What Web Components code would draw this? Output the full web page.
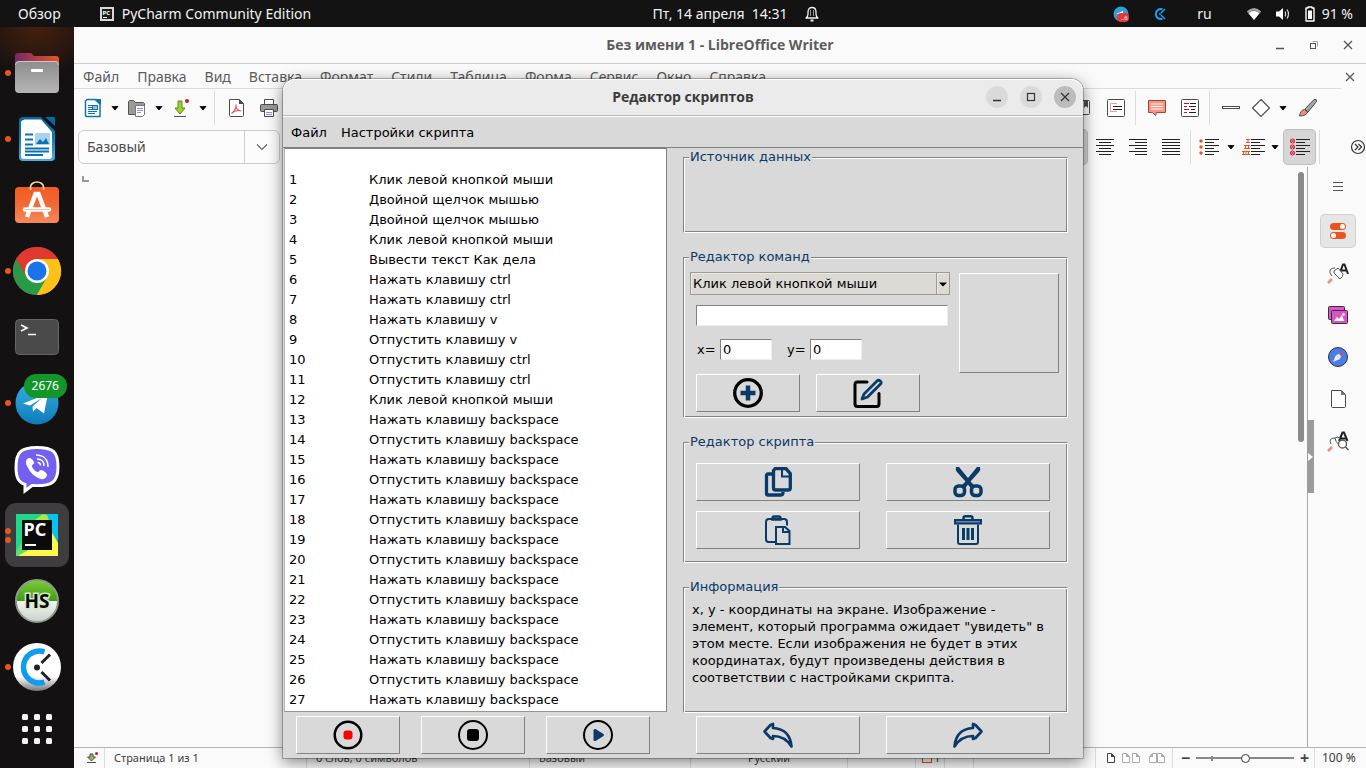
<!DOCTYPE html>
<html lang="ru">
<head>
<meta charset="utf-8">
<meta name="viewport" content="width=device-width, initial-scale=1">
<title>Рабочий стол</title>
<style>
html, body { margin: 0; height: 100%; }
body { overflow: hidden; background: #fafafa; font: 14px/20px "Noto Sans", "Open Sans", sans-serif; color: #3d3d3d; }
</style>
</head>
<body>
<desk-top></desk-top>
<script>
const ICONS = {
  /* top bar */
  pc: ['0 0 14 14', '<rect width="14" height="14" fill="#d8d8d8"/><rect x="2" y="2" width="10" height="10" fill="#1c1c1c"/><text x="2.5" y="7.5" font-family="Noto Sans" font-size="6" font-weight="700" fill="#fff">PC</text><path d="M3 10.5h4" stroke="#fff"/>'],
  bell: ['0 0 16 18', '<path d="M2 13c1.5-1 2-2 2-4V7c0-3 1.5-4.5 4-4.500S12 4 12 7v2c0 2 .5 3 2 4z" fill="none" stroke="#f2f2f2" stroke-width="1.3" stroke-linejoin="round"/><path d="M6.500 15.500h3" stroke="#f2f2f2" stroke-width="2"/><path d="M6.500 5v6M9.500 5v6" stroke="#bbb" stroke-width=".8"/>'],
  tgTray: ['0 0 16 16', '<circle cx="8" cy="8" r="7.5" fill="#2d9fd9"/><path d="M3 8l7-3v4z" fill="#fff"/><rect x="4" y="7" width="12" height="9" rx="4" fill="#e53935"/><text x="8" y="14" font-family="Noto Sans" font-size="6" fill="#fff">..6</text>'],
  clockTray: ['0 0 14 14', '<path d="M9.500 2.300A5 5 0 1 0 9.500 11.700" fill="none" stroke="#12a5f4" stroke-width="2"/><path d="M8 6l4-4M8 8l4 4" stroke="#12a5f4" stroke-width="1.5"/><circle cx="7" cy="7" r="1" fill="#12a5f4"/>'],
  wifi: ['0 0 16 16', '<path d="M1 5.500Q8-1 15 5.500L8 14z" fill="#777"/><path d="M1 5.500Q8-1 15 5.500L14 6.700Q8 1.500 2 6.700z" fill="#aaa"/><path d="M2.500 7.200Q8 3 13.500 7.200L8 14z" fill="#fff"/>'],
  volume: ['0 0 16 16', '<path d="M1 5.500h3L8 2v12L4 10.500H1z" fill="#fff"/><path d="M10 5.500q1.500 2.500 0 5M12 3.500q3 4.500 0 9" fill="none" stroke="#ddd" stroke-width="1.2"/>'],
  battery: ['0 0 12 16', '<path d="M4 2V1h4v1h2v13H2V2z" fill="none" stroke="#fff" stroke-width="1.4" stroke-linejoin="round"/><path d="M4 4.500h4V13H4z" fill="#fff"/>'],
  /* dock */
  files: ['0 0 48 48', '<linearGradient id="g" x2="1"><stop stop-color="#77296a"/><stop offset="1" stop-color="#e9541f"/></linearGradient><linearGradient id="h" x2="0" y2="1"><stop stop-color="#8d8d8d"/><stop offset="1" stop-color="#b5b5b5"/></linearGradient><path d="M2 7q0-3 3-3h13l3 3h22q3 0 3 3v20H2z" fill="url(#g)"/><rect x="2" y="12" width="44" height="32" rx="4" fill="url(#h)"/><path d="M2.500 16q0-3.500 3.500-3.500h36q3.500 0 3.500 3.500" fill="none" stroke="#c8c8c8"/><rect x="18" y="20" width="12" height="3" rx="1" fill="#fff"/>'],
  writer: ['0 0 48 48', '<linearGradient id="w" x2="0" y2="1"><stop stop-color="#0369a3"/><stop offset=".5" stop-color="#0f7dbb"/><stop offset="1" stop-color="#4cb0e0"/></linearGradient><path d="M10 2h18l14 14v26q0 4-4 4H10q-4 0-4-4V6q0-4 4-4z" fill="url(#w)"/><path d="M11 4.500h17L39 17v24q0 3-3 3H11q-3 0-3-3V7.500q0-2.500 3-2.500z" fill="#fff"/><path d="M32 2h9q1 0 1 1v8z" fill="#0369a3"/><path d="M12 19.500h8M12 24.500h8M12 29.500h8M12 33.500h24M12 36.500h24M12 40h18" stroke="#0a73b3" stroke-width="2"/><rect x="22" y="18" width="15" height="12" rx="1" fill="#a8d3ee"/><path d="M23 29l4-5 3 3 3-4 3 6z" fill="#0a73b3"/>'],
  store: ['0 0 48 48', '<linearGradient id="s" x2="0" y2="1"><stop stop-color="#f15a24"/><stop offset=".5" stop-color="#f26a35"/><stop offset="1" stop-color="#f58a5a"/></linearGradient><rect x="2" y="6" width="44" height="36" rx="4" fill="url(#s)"/><path d="M17.500 9V6a6.500 5 0 0 1 13 0v3" fill="none" stroke="#f7d9a3" stroke-width="1.7"/><path d="M14 36L22.500 13h3L34 36" fill="none" stroke="#fff" stroke-width="4.5"/><path d="M12 28.500h24" stroke="#fff" stroke-width="4.5" stroke-linecap="round"/><path d="M12 28.500h24" stroke="#f3c3ad"/>'],
  chrome: ['0 0 48 48', '<circle cx="24" cy="24" r="24" fill="#e03a30"/><path d="M3.200 12A24 24 0 0 0 24 48L34.400 30 24 24 13.600 30z" fill="#2a9a48"/><path d="M44.800 12A24 24 0 0 1 24 48L34.400 30 34 12z" fill="#fbc116"/><path d="M24 12h20.800A24 24 0 0 0 3.200 12L13.600 30 24 24z" fill="#e03a30"/><path d="M24 24L34.400 30 24 48A24 24 0 0 0 46.500 16L44.800 12H24z" fill="#fbc116"/><circle cx="24" cy="24" r="12" fill="#fff"/><circle cx="24" cy="24" r="9.5" fill="#1a73e8"/>'],
  terminal: ['0 0 48 48', '<rect x="2.5" y="6.5" width="43" height="35" rx="4" fill="#4a4a4a" stroke="#666"/><path d="M8 12l6 3-6 3" fill="none" stroke="#fff" stroke-width="1.7"/><path d="M15 21.500h8" stroke="#fff" stroke-width="1.5"/>'],
  telegram: ['0 0 48 48', '<linearGradient id="t" x2="0" y2="1"><stop stop-color="#37aee2"/><stop offset="1" stop-color="#0d7cba"/></linearGradient><circle cx="24" cy="24" r="21.5" fill="url(#t)"/><path d="M10 24.500L35 14.500 31 34.500 23.500 29 20 32.500 19.500 27.500 29 19 17 26.500z" fill="#fff"/>'],
  viber: ['0 0 48 48', '<path d="M24 2.500C8 2.500 3 7 3 22c0 10 2 15 9 17.500V46l7-5.500c20 1 26-3 26-18.500S40 2.500 24 2.500z" fill="#7360f2" stroke="#fff" stroke-width="3"/><path d="M16 13c-3 1-4 4-2 8 4 8 8 11 14 13 3 1 6-2 6-4s-4-5-6-5-2 3-4 2-5-4-5-6 3-2 2-4-3-4-5-4z" fill="#fff"/><path d="M23 10c8 0 12 5 12 12M24 14c5 0 7 3 7 7M24.500 17.500c2 0 3 1 3 3" fill="none" stroke="#fff" stroke-width="1.5"/>'],
  pycharm: ['0 0 48 48', '<rect x="3" y="3" width="42" height="42" fill="#21d789"/><path d="M32 3h13v30L32 12z" fill="#07c3f2"/><path d="M22 9l8-6 4 1 3 8z" fill="#b5e63e"/><path d="M38 20l7 12v13H14L5 45l8-10z" fill="#fcf84a"/><path d="M3 40l8-12 6 10-12 7H3z" fill="#5fdd74"/><rect x="9" y="9" width="30" height="30" fill="#0b0b0b"/><text x="10.5" y="25" font-family="Noto Sans" font-size="18" font-weight="700" fill="#fff">PC</text><rect x="12" y="33" width="11" height="2" fill="#fff"/>'],
  hs: ['0 0 48 48', '<linearGradient id="e" x2="0" y2="1"><stop stop-color="#7fce3a"/><stop offset=".5" stop-color="#3f9a14"/><stop offset=".51" stop-color="#f4f4f4"/><stop offset="1" stop-color="#c9cfc9"/></linearGradient><circle cx="24" cy="24" r="21" fill="url(#e)" stroke="#8b9a8a" stroke-width="2"/><text x="24" y="31" text-anchor="middle" font-family="Noto Sans" font-size="19" font-weight="700" stroke="#d6e8cc" stroke-width="3" paint-order="stroke" fill="#0a0a0a">HS</text>'],
  clockify: ['0 0 48 48', '<linearGradient id="k" x2="0" y2="1"><stop offset=".7" stop-color="#fff"/><stop offset="1" stop-color="#777"/></linearGradient><circle cx="24" cy="24" r="24" fill="url(#k)"/><path d="M31.500 8.800A16 16 0 1 0 31.500 39.200" fill="none" stroke="#0d9cf0" stroke-width="5.5"/><circle cx="24" cy="24.5" r="3" fill="#222"/><path d="M28.500 20L37 11.500M28.500 29L37 37.500" stroke="#222" stroke-width="3"/>'],
  apps: ['0 0 30 30', '<g fill="#f3f3f3">' + [0, 12, 24].map(y => [0, 12, 24].map(x => `<rect x="${x}" y="${y}" width="6" height="6" rx="1.5"/>`).join('')).join('') + '</g>'],
  /* window controls */
  min: ['0 0 12 12', '<path d="M2 9.500h8" stroke="currentColor" stroke-width="1.5"/>'],
  max: ['0 0 12 12', '<rect x="2.5" y="2.5" width="7" height="7" fill="none" stroke="currentColor" stroke-width="1.2"/>'],
  restore: ['0 0 12 12', '<path d="M4.500 2.500h5v5" fill="none" stroke="#aaa"/><rect x="2.5" y="4.5" width="5" height="5" fill="none" stroke="currentColor"/>'],
  close: ['0 0 12 12', '<path d="M2 2l8 8M10 2l-8 8" stroke="currentColor" stroke-width="1.2"/>'],
  /* writer toolbars */
  arrow: ['0 0 8 8', '<path d="M1 2.500h6L4 6z" fill="#000" stroke="#000" stroke-width=".8"/>'],
  newDoc: ['0 0 20 20', '<path d="M4 1.500h8L17 6v12.500H3.500A1.500 1.500 0 0 1 2.500 17V3z" fill="#fff" stroke="#1173ae" stroke-width="1.5"/><path d="M12 1h6v6z" fill="#1173ae"/><path d="M5 7.500h4M5 9.500h4M5 11.500h4M5 13.500h9M5 15.500h7" stroke="#1173ae"/><rect x="9.5" y="7.5" width="5" height="4" fill="#8cc3e6" stroke="#1173ae"/>'],
  folder: ['0 0 20 20', '<path d="M1.500 3.500l1-1h4l2 2h8l1 1v11h-16z" fill="#9a9a9a" stroke="#555"/><path d="M8.500 7.500h9v9l-2 2h-7z" fill="#fff" stroke="#777"/><path d="M10 10.500h6M10 12.500h6M10 14.500h4" stroke="#8f8fe8"/>'],
  save: ['0 0 20 20', '<path d="M7 3h4v7h3l-5 6-5-6h3z" fill="#9ed12f" stroke="#5a8f14"/><path d="M3 18.500h12" stroke="#555"/><circle cx="16" cy="3" r="2" fill="#d0103a"/>'],
  pdf: ['0 0 20 20', '<path d="M3.500 1.500h10l4 4v12a1 1 0 0 1-1 1h-12a1 1 0 0 1-1-1z" fill="#fff" stroke="#4c4c4c"/><path d="M13 1l5 5h-5z" fill="#4c4c4c"/><path d="M5.500 15.500c3-2 5-6 4.500-9-.5 4 2 6 5 6.500-3-1-7 0-9.500 2.500z" fill="none" stroke="#ee5566" stroke-width="1.2"/>'],
  print: ['0 0 20 20', '<path d="M5.500 7V1.500h9V7" fill="#fff" stroke="#4c4c4c"/><rect x="1.5" y="6.5" width="17" height="7" rx="1" fill="#9a9a9a" stroke="#4c4c4c"/><path d="M5.500 11.500h9v7h-9z" fill="#fff" stroke="#4c4c4c"/><path d="M7 14.500h6M7 16.500h6" stroke="#8f8fe8"/>'],
  mark: ['0 0 20 20', '<rect x="2.5" y="2.5" width="14" height="14" rx="1" fill="#fff" stroke="#4c4c4c"/><path d="M11 3h4v7l-2-2-2 2z" fill="#4c4c4c"/>'],
  caption: ['0 0 20 20', '<rect x="1.5" y="1.5" width="17" height="17" rx="1" fill="#fff" stroke="#4c4c4c"/><path d="M11 5.500H4.500v8H11" fill="none" stroke="#f59a8a"/><path d="M7 8.500h9M7 11.500h9" stroke="#222"/>'],
  comment: ['0 0 20 20', '<path d="M1.500 2.500h17v12h-9l-1 3-3-3h-4z" fill="#fd9280" stroke="#a0453a"/><path d="M4 6h12M4 8.500h12M4 11h12" stroke="#fff"/>'],
  track: ['0 0 20 20', '<rect x="1.5" y="1.5" width="17" height="17" rx="1" fill="#fff" stroke="#4c4c4c"/><path d="M4 5.500h5M4 8.500h3M4 11.500h5M4 14.500h3" stroke="#c8102e"/><path d="M10 5.500h6M9 8.500h7M11 11.500h4M9 14.500h7" stroke="#222"/>'],
  line: ['0 0 20 20', '<rect x="1.5" y="8.5" width="17" height="2" fill="#fff" stroke="#4c4c4c"/>'],
  diamond: ['0 0 20 20', '<path d="M10 1.500l8.500 8.500-8.500 8.500L1.500 10z" fill="#fff" stroke="#4c4c4c" stroke-width="1.2"/>'],
  brush: ['0 0 20 20', '<path d="M7 11L16 1.500q3-1 2.500 2L10 14z" fill="#a5a5a5" stroke="#4c4c4c"/><path d="M1.500 18q1-6 5-6.500l3 2.500q-1 4-8 4z" fill="#f58a7a" stroke="#4c4c4c"/>'],
  alignC: ['0 0 20 20', '<path d="M1 2.500h18M4 5.500h12M1 8.500h18M4 11.500h12M1 14.500h18M4 17.500h12" stroke="#222"/>'],
  alignR: ['0 0 20 20', '<path d="M1 2.500h18M7 5.500h12M1 8.500h18M7 11.500h12M1 14.500h18M7 17.500h12" stroke="#222"/>'],
  alignJ: ['0 0 20 20', '<path d="M1 2.500h18M1 5.500h18M1 8.500h18M1 11.500h18M1 14.500h18M1 17.500h18" stroke="#222"/>'],
  bullets: ['0 0 20 20', '<path d="M6 2.500h14M6 5.500h9M6 8.500h14M6 11.500h9M6 14.500h14M6 17.500h9" stroke="#222"/><g fill="#e95420"><circle cx="2" cy="4" r="1.7"/><circle cx="2" cy="10" r="1.7"/><circle cx="2" cy="16" r="1.7"/></g>'],
  numbers: ['0 0 22 20', '<path d="M9 2.500h14M9 5.500h9M9 8.500h14M9 11.500h9M9 14.500h14M9 17.500h9" stroke="#222"/><path d="M4 2.500h4M6 2.500v3M4 5.500h4M2 8.500h6M3.500 8.500v3M6.500 8.500v3M2 11.500h6M0 14.500h8M1.500 14.500v3M4 14.500v3M6.500 14.500v3M0 17.500h8" stroke="#e95420"/>'],
  noList: ['0 0 20 20', '<path d="M6 2.500h14M6 5.500h9M6 8.500h14M6 11.500h9M6 14.500h14M6 17.500h9" stroke="#222"/><g fill="#fff" stroke="#c8102e"><circle cx="2.5" cy="4" r="2"/><circle cx="2.5" cy="10" r="2"/><circle cx="2.5" cy="16" r="2"/><path d="M1 2.500l3 3m0-3l-3 3M1 8.500l3 3m0-3l-3 3M1 14.500l3 3m0-3l-3 3"/></g>'],
  more: ['0 0 16 16', '<circle cx="8" cy="8" r="6.5" fill="none" stroke="#333" stroke-width="1.2"/><path d="M5 5l3 3-3 3M8.500 5l3 3-3 3" fill="none" stroke="#333" stroke-width="1.2"/>'],
  /* side panel */
  burger: ['0 0 20 20', '<path d="M5 6.500h10M5 10.500h10M5 14.500h10" stroke="#555"/>'],
  props: ['0 0 20 20', '<rect x="2" y="2" width="16" height="7" rx="3.5" fill="#e95420"/><rect x="2" y="11" width="16" height="7" rx="3.5" fill="#e95420"/><circle cx="14.5" cy="5.5" r="2.5" fill="#fff"/><circle cx="5.5" cy="14.5" r="2.5" fill="#fff"/>'],
  styles: ['0 0 22 22', '<path d="M12.500 12L16 2.500h1.500L21 12M14 8.500h6" fill="none" stroke="#222" stroke-width="2"/><path d="M7 9l4-3 5 6q0 3-3 5l-6-6z" fill="#fff" stroke="#555"/><path d="M8 6Q2 6 3 11l2 3" fill="none" stroke="#555"/><path d="M1 21l4-4" stroke="#f58a7a" stroke-width="2.5"/>'],
  gallery: ['0 0 20 20', '<rect x=".5" y="1.5" width="16" height="13" rx="1" fill="#d955c6" stroke="#333"/><rect x="3.5" y="5.5" width="16" height="13" rx="1" fill="#d955c6" stroke="#333"/><path d="M6 16l3-4 2 2 3-4 2 6z" fill="#fff"/><circle cx="15.5" cy="9.5" r="1.2" fill="#fff"/>'],
  compass: ['0 0 20 20', '<circle cx="10" cy="10" r="9.5" fill="#4a7de8" stroke="#333"/><path d="M5 15l3-7 4 4z" fill="#eee"/><path d="M14 6l-6 2 4 4z" fill="#eee"/><path d="M15 5l-4 2 2 2z" fill="#e33"/>'],
  page: ['0 0 20 20', '<path d="M3.500 1.500h10l4 4v12a1 1 0 0 1-1 1h-12a1 1 0 0 1-1-1z" fill="#fff" stroke="#4c4c4c"/><path d="M13 1l5 5h-5z" fill="#777"/>'],
  inspect: ['0 0 22 22', '<path d="M12 11L15.500 2.500h1.500L20.500 11M13 8.500h6" fill="none" stroke="#222" stroke-width="2"/><path d="M4 14q-3-6 4-6 0 3 4 7M8 8l3-1 2 2" fill="none" stroke="#555"/><path d="M1 21l4-4" stroke="#f58a7a" stroke-width="2.5"/><circle cx="15.5" cy="14" r="4" fill="#fff" stroke="#555" stroke-width="1.3"/><path d="M18.500 17l3 3" stroke="#555" stroke-width="1.5"/>'],
  /* status bar */
  saved: ['0 0 12 12', '<path d="M4 2h3v3h2.500L5.500 9 1.500 5H4z" fill="#8bc34a" stroke="#4c4c4c"/><path d="M1 10.500h9" stroke="#4c4c4c"/><circle cx="10.5" cy="1.5" r="1.5" fill="#d0103a"/>'],
  one: ['0 0 8 10', '<path d="M.5.500h4l3 3v6h-7z" fill="#fff" stroke="#444"/><path d="M4 0l4 4H4z" fill="#444"/>'],
  two: ['0 0 18 10', '<g fill="#fff" stroke="#aaa"><path d="M.5.500h4l3 3v6h-7zM10.500.500h4l3 3v6h-7z"/></g><path d="M4 0l4 4H4zM14 0l4 4h-4z" fill="#aaa"/>'],
  book: ['0 0 16 10', '<g fill="#fff" stroke="#aaa"><path d="M7.500.500h-4l-3 3v6h7zM8.500.500h4l3 3v6h-7z"/></g><path d="M4 0v4H0zM12 0l4 4h-4z" fill="#aaa"/>'],
  doc: ['0 0 10 10', '<rect x=".5" y=".5" width="9" height="9" fill="none" stroke="#c0552d"/>'],
  /* script editor */
  record: ['0 0 30 30', '<circle cx="15" cy="15" r="13.3" fill="none" stroke="#000" stroke-width="2.5"/><rect x="10.5" y="10.5" width="9" height="9" rx="3" fill="#f00"/>'],
  stop: ['0 0 30 30', '<circle cx="15" cy="15" r="14" fill="none" stroke="#000" stroke-width="2"/><rect x="9" y="9" width="12" height="12" rx="3" fill="#000"/>'],
  play: ['0 0 30 30', '<circle cx="15" cy="15" r="14" fill="none" stroke="#000" stroke-width="2"/><path d="M10.500 10.500q0-2 2-1.500l8 5q1 1 0 2l-8 5q-2 .5-2-1.500z" fill="#0a3a68"/>'],
  add: ['0 0 30 30', '<circle cx="15" cy="15" r="13.3" fill="none" stroke="#000" stroke-width="3.3"/><path d="M15 7.500v15M7.500 15h15" stroke="#0a3a68" stroke-width="4.5"/>'],
  edit: ['0 0 30 30', '<path d="M14 4H4.500Q2 4 2 6.500V26q0 2.500 2.500 2.500h19Q26 28.500 26 26V15.500" fill="none" stroke="#000" stroke-width="3" stroke-linecap="round"/><path d="M11 16L24 3q1.500-1.500 3.300 0t0 3.300L14.500 19 9 21z" fill="none" stroke="#0a3a68" stroke-width="2.8" stroke-linejoin="round"/>'],
  copy: ['0 0 30 30', '<g fill="none" stroke="#0a3a68" stroke-width="3.3" stroke-linejoin="round"><path d="M9 7H5Q3.500 7 3.500 8.500v18Q3.500 28 5 28h13q2 0 2-3"/><path d="M12 1.700h11l4.300 5V21q0 2-2 2H12.500q-2 0-2-2V3.500z"/></g><path d="M19 2v7.500h8" fill="none" stroke="#0a3a68" stroke-width="2"/>'],
  cut: ['0 0 30 30', '<path d="M3 0h3l9 11 9-11h3q1 3-1 5l-8.500 9.500 4 4-3.500 3-3-4-3 4-3.500-3 4-4L4 5Q2 3 3 0z" fill="#0a3a68"/><rect x="2" y="19" width="9.5" height="9.5" rx="3.5" fill="none" stroke="#0a3a68" stroke-width="3.5"/><rect x="18.5" y="19" width="9.5" height="9.5" rx="3.5" fill="none" stroke="#0a3a68" stroke-width="3.5"/>'],
  paste: ['0 0 30 30', '<g fill="none" stroke="#0a3a68" stroke-width="2"><path d="M12 27H5.500Q3 27 3 24V7q0-3 3-3h15q3 0 3 3v3.500"/><path d="M9.500 4.500v-1q0-2 2-2h4q2 0 2 2v1z" stroke-width="2.5"/><path d="M13 12h9l4.500 4v13H13z"/><path d="M20 11.500v5.500h6"/></g>'],
  trash: ['0 0 30 30', '<g fill="none" stroke="#0a3a68" stroke-width="2"><path d="M10.500 4.500V3q0-1.700 2-1.700h5q2 0 2 1.700v1.500" stroke-width="2.5"/><path d="M2 5h26v3.500H2z" fill="#0a3a68" fill-opacity=".55"/><path d="M5 9.500V27q0 2 2 2h16q2 0 2-2V9.500"/></g><path d="M10.500 13v12M15 13v12M19.500 13v12" stroke="#0a3a68" stroke-width="3"/>'],
  undo: ['0 0 30 30', '<path d="M1.500 11.500L7.500 5 10 4v4Q27 9 28.500 26.500 22 16 10 16v3L7.500 18z" fill="none" stroke="#0a3a68" stroke-width="2.7" stroke-linejoin="round"/>'],
  redo: ['0 0 30 30', '<path d="M28.500 11.500L22.500 5 20 4v4Q3 9 1.500 26.500 8 16 20 16v3l2.500-1z" fill="none" stroke="#0a3a68" stroke-width="2.7" stroke-linejoin="round"/>']
};

function define(name, css, html, init) {
  const tpl = document.createElement('template');
  tpl.innerHTML = `<style>*{box-sizing:border-box}${css}</style>${html}`;
  customElements.define(name, class extends HTMLElement {
    connectedCallback() {
      if (this.shadowRoot) return;
      this.attachShadow({ mode: 'open' }).append(tpl.content.cloneNode(true));
      if (init) init(this, this.shadowRoot);
    }
  });
}

define('ui-icon', ':host{display:block;flex:none;line-height:0}svg{display:block;overflow:visible}', '<svg aria-hidden="true"></svg>', (el, root) => {
  const [box, art] = ICONS[el.getAttribute('name')];
  const svg = root.querySelector('svg');
  const [, , w, h] = box.split(' ');
  svg.setAttribute('viewBox', box);
  svg.setAttribute('width', w);
  svg.setAttribute('height', h);
  svg.innerHTML = art;
});

define('top-bar', `
:host{display:grid;grid-template-columns:1fr auto 1fr;align-items:center;height:27px;background:#131313;color:#f2f2f2}
div{display:flex;align-items:center}
button{all:unset;display:flex;align-items:center;gap:8px;white-space:pre}
.l{padding-left:18px;gap:39px}
.c{gap:16px;padding-left:106px}
.r{justify-content:flex-end;padding-right:13px}
.r button{margin-left:13px;gap:6px}
.r .t{margin-left:24px}.r .k{margin-left:30px}.r .w{margin-left:34px}`, `
<div class="l"><button>Обзор</button><button><ui-icon name="pc"></ui-icon>PyCharm Community Edition</button></div>
<div class="c"><button>Пт, 14 апреля  14:31</button><button aria-label="Уведомления"><ui-icon name="bell"></ui-icon></button></div>
<div class="r"><button aria-label="Telegram"><ui-icon name="tgTray"></ui-icon></button><button class="t" aria-label="Clockify"><ui-icon name="clockTray"></ui-icon></button><button class="k">ru</button><button class="w" aria-label="Сеть"><ui-icon name="wifi"></ui-icon></button><button aria-label="Звук"><ui-icon name="volume"></ui-icon></button><button><ui-icon name="battery"></ui-icon>91 %</button></div>`);

define('dock-item', `
:host{display:flex;height:66px;position:relative;align-items:center;justify-content:center}
button{all:unset;display:flex;align-items:center;justify-content:center;width:64px;height:64px;border-radius:11px}
:host([active]) button{background:#3f3d3f}
.dots{position:absolute;left:5px;top:0;bottom:0;display:flex;flex-direction:column;justify-content:center;gap:3px}
.dots i{width:6px;height:6px;border-radius:50%;background:#e95420}
.badge{position:absolute;right:7px;top:4px;height:24px;padding:0 8px;border-radius:12px;background:#12962a;color:#fff;font-size:12px;line-height:24px}
.badge:empty{display:none}`, '<button></button><span class="dots"></span><span class="badge"></span>', (el, root) => {
  const icon = document.createElement('ui-icon');
  icon.setAttribute('name', el.getAttribute('icon'));
  const button = root.querySelector('button');
  button.append(icon);
  button.setAttribute('aria-label', el.getAttribute('label'));
  root.querySelector('.dots').innerHTML = '<i></i>'.repeat(+el.getAttribute('windows') || 0);
  root.querySelector('.badge').textContent = el.getAttribute('badge') || '';
});

define('app-dock', `
:host{display:flex;flex-direction:column;width:74px;flex:none;padding-top:13px;background:radial-gradient(ellipse 60px 50px at 50% 0,#46200f,#2a170f 60%,transparent) #131112}
.apps{height:58px}`, `
<dock-item icon="files" label="Файлы" windows="1"></dock-item>
<dock-item icon="writer" label="LibreOffice Writer" windows="1"></dock-item>
<dock-item icon="store" label="Ubuntu Software"></dock-item>
<dock-item icon="chrome" label="Google Chrome" windows="1"></dock-item>
<dock-item icon="terminal" label="Терминал"></dock-item>
<dock-item icon="telegram" label="Telegram" windows="1" badge="2676"></dock-item>
<dock-item icon="viber" label="Viber"></dock-item>
<dock-item icon="pycharm" label="PyCharm" windows="2" active></dock-item>
<dock-item icon="hs" label="HS"></dock-item>
<dock-item icon="clockify" label="Clockify" windows="1"></dock-item>
<dock-item class="apps" icon="apps" label="Приложения"></dock-item>`);

define('tool-strip', `
:host{display:flex;height:39px;align-items:center;padding-bottom:1px;box-sizing:border-box}
button{all:unset;display:flex;align-items:center;justify-content:center;width:33px;height:36px;flex:none}
.i{width:28px}.a{width:16px}
.on{background:#d6d6d6;border-radius:5px;box-shadow:inset 0 0 0 1px #c0c0c0}
.sep{width:1px;height:34px;background:#dcdcdc;margin:0 4px 0 3px;flex:none}`, '', (el, root) => {
  for (const word of el.getAttribute('items').split(' ')) {
    if (word === '|') {
      const s = document.createElement('span');
      s.className = 'sep';
      root.append(s);
      continue;
    }
    const [name, cls] = word.split('.');
    const b = document.createElement('button');
    b.setAttribute('aria-label', name);
    b.className = name === 'arrow' ? 'a' : cls || '';
    const icon = document.createElement('ui-icon');
    icon.setAttribute('name', name);
    b.append(icon);
    root.append(b);
  }
});

define('status-bar', `
:host{display:flex;height:21px;border-top:1px solid #b4b4b4;box-sizing:border-box;font-size:11px;line-height:20px;color:#3d3d3d;background:#fafafa;white-space:nowrap}
span{display:flex;align-items:center;gap:5px;padding-left:9px;border-left:1px solid #dcdcdc;flex:none}
.state{border:0;width:30px;padding-left:12px}
.page{width:202px}.words{width:223px}.style{width:161px}.lang{width:157px;justify-content:center;padding:0}
.ins{width:68px}.doc{width:29px;padding-left:6px;gap:2px}.sign{width:29px}.gap{flex:1}
.views{width:77px;padding-left:11px;gap:9px}.views ui-icon:nth-child(2){margin-left:-2px}.zoom{width:142px;padding-left:8px;gap:6px}.pct{width:52px;padding-left:7px;font-size:12px}
button{all:unset;width:9px;text-align:center;font:700 16px/16px "Noto Sans",sans-serif;color:#444}
input{appearance:none;width:98px;height:12px;margin:0;background:linear-gradient(#888,#888) 0 50%/100% 2px no-repeat,linear-gradient(#888,#888) 15px 50%/2px 5px no-repeat}
input::-webkit-slider-thumb{appearance:none;width:9px;height:9px;border-radius:50%;border:1px solid #333;background:#fff}`, `
<span class="state"><ui-icon name="saved"></ui-icon></span><span class="page">Страница 1 из 1</span><span class="words">0 слов, 0 символов</span><span class="style">Базовый</span><span class="lang">Русский</span><span class="ins"></span><span class="doc"><ui-icon name="doc"></ui-icon>1</span><span class="sign"></span><span class="gap"></span>
<span class="views"><ui-icon name="one"></ui-icon><ui-icon name="two"></ui-icon><ui-icon name="book"></ui-icon></span>
<span class="zoom"><button aria-label="Уменьшить">−</button><input type="range" min="0" max="100" value="50" aria-label="Масштаб"><button aria-label="Увеличить">+</button></span><span class="pct">100 %</span>`);

define('side-panel', `
:host{display:flex;flex:none;width:59px;border-left:1px solid #a8a8a8;position:relative;box-sizing:border-box}
nav{display:flex;flex-direction:column;gap:8px;padding:2px 10px 0 12px}
button{all:unset;display:flex;width:36px;height:34px;align-items:center;justify-content:center;border-radius:5px}
nav button:first-child{margin-bottom:3px}
.on{background:#e6e6e6;box-shadow:inset 0 0 0 1px #d0d0d0}
.grip{position:absolute;left:-1px;top:253px;width:7px;height:73px;border-radius:0;background:#9b9b9b}
.grip::before{content:"";border:solid transparent;border-width:4px 0 4px 5px;border-left-color:#fff}`, `
<nav aria-label="Боковая панель"><button aria-label="Меню"><ui-icon name="burger"></ui-icon></button><button class="on" aria-label="Свойства"><ui-icon name="props"></ui-icon></button><button aria-label="Стили"><ui-icon name="styles"></ui-icon></button><button aria-label="Галерея"><ui-icon name="gallery"></ui-icon></button><button aria-label="Навигатор"><ui-icon name="compass"></ui-icon></button><button aria-label="Страница"><ui-icon name="page"></ui-icon></button><button aria-label="Инспектор стилей"><ui-icon name="inspect"></ui-icon></button></nav>
<button class="grip" aria-label="Скрыть панель"></button>`);

define('writer-window', `
:host{display:flex;flex-direction:column;flex:1;min-width:0;background:#fafafa;color:#5a5a5a}
header{display:grid;grid-template-columns:1fr auto 1fr;align-items:center;height:37px;border-bottom:1px solid #cdcdcd}
h1{grid-column:2;margin:0;font:700 14px/20px "Open Sans",sans-serif;color:#5c5c5c}
.ctl{display:flex;justify-content:flex-end;gap:22px;padding-right:12px;color:#555}
button{all:unset}
nav{display:flex;align-items:center;gap:18px;height:25px;padding:0 10px 0 9px}
nav .x{margin-left:auto;color:#555}
.rule{height:1px;margin-right:25px;background:#dcdcdc;margin-top:-1px}
.bar{display:flex;justify-content:space-between;align-items:center;padding:0 42px 0 5px}
.bar.two{padding:0 0 0 4px}
.right{display:flex;align-items:center;gap:26px}
.right button{padding-bottom:1px}
.style{position:relative;display:flex;width:202px;height:34px;margin-bottom:1px}
select{appearance:none;width:100%;border:1px solid #cdcdcd;border-radius:6px;background:#fcfcfc;padding:0 8px;font:inherit;color:#4c4c4c}
.style svg{position:absolute;right:0;top:1px;pointer-events:none}
main{display:flex;flex:1;min-height:0}
.doc{flex:1;padding:9px 0 0 8px}
.doc::before{content:"";display:block;width:5px;height:4px;border:solid #9a9a9a;border-width:0 0 2px 2px}
.scroll{width:6px;margin:5px 3px 0 0;height:270px;border-radius:3px;background:#8a8a8a}`, `
<header><h1>Без имени 1 - LibreOffice Writer</h1><div class="ctl"><button aria-label="Свернуть"><ui-icon name="min"></ui-icon></button><button aria-label="Восстановить"><ui-icon name="restore"></ui-icon></button><button aria-label="Закрыть"><ui-icon name="close"></ui-icon></button></div></header>
<nav><button>Файл</button><button>Правка</button><button>Вид</button><button>Вставка</button><button>Формат</button><button>Стили</button><button>Таблица</button><button>Форма</button><button>Сервис</button><button>Окно</button><button>Справка</button><button class="x" aria-label="Закрыть документ"><ui-icon name="close"></ui-icon></button></nav>
<div class="rule"></div>
<div class="bar"><tool-strip items="newDoc.i arrow folder.i arrow save.i arrow | pdf print"></tool-strip><tool-strip items="mark caption | comment track | line diamond.i arrow brush"></tool-strip></div>
<div class="bar two"><label class="style"><select aria-label="Стиль абзаца"><option>Базовый</option></select><svg width="36" height="32" viewBox="0 0 36 32" aria-hidden="true"><path d="M.5 0v32" stroke="#cdcdcd"/><path d="M13 13.500l5 5 5-5" fill="none" stroke="#666" stroke-width="1.2"/></svg></label>
<div class="right"><tool-strip items="alignJ.on alignC alignR alignJ | bullets.i arrow numbers.i arrow noList.on |"></tool-strip><button aria-label="Ещё"><ui-icon name="more"></ui-icon></button></div></div>
<main><div class="doc"></div><div class="scroll"></div><side-panel></side-panel></main>
<status-bar></status-bar>`);

define('tk-button', `
:host{display:block;height:38px;width:104px}
button{all:unset;box-sizing:border-box;display:flex;align-items:center;justify-content:center;width:100%;height:100%;background:#d9d9d9;border:1px solid;border-color:#fff #828282 #828282 #fff}`,
'<button><slot></slot></button>', (el, root) => root.querySelector('button').setAttribute('aria-label', el.getAttribute('label')));

define('group-box', `
:host{display:flex}
fieldset{flex:1;min-width:0;margin:0;border:1px solid;border-color:#828282 #fff #fff #828282;box-shadow:inset 1px 1px #fff,inset -1px -1px #828282;padding:var(--pad,0)}
legend{margin-left:var(--legend,5px);padding:0 1px;height:18px;line-height:18px;background:#d9d9d9;color:#0a3a68}`,
'<fieldset><legend></legend><slot></slot></fieldset>', (el, root) => { root.querySelector('legend').textContent = el.getAttribute('label'); });

define('script-list', `
:host{display:block;background:#fff;border:1px solid;border-color:#828282 #828282 #9a958a #b9b5ab;padding:21px 4px 1px 4px;color:#000}
table{border-collapse:collapse;width:100%;table-layout:fixed}
col:first-child{width:80px}
td{padding:0;height:20px;line-height:20px;white-space:nowrap}`,
'<table aria-label="Команды скрипта"><colgroup><col><col></colgroup><tbody></tbody></table>', (el, root) => {
  const down = 'Нажать клавишу ', up = 'Отпустить клавишу ', click = 'Клик левой кнопкой мыши', twice = 'Двойной щелчок мышью';
  const rows = [click, twice, twice, click, 'Вывести текст Как дела', down + 'ctrl', down + 'ctrl', down + 'v', up + 'v', up + 'ctrl', up + 'ctrl', click];
  for (let n = 13; n <= 27; n++) rows.push((n % 2 ? down : up) + 'backspace');
  root.querySelector('tbody').innerHTML = rows.map((t, i) => `<tr><td>${i + 1}</td><td>${t}</td></tr>`).join('');
});

define('command-editor', `
:host{display:flex;gap:9px;align-items:flex-start}
.form{width:260px}
.combo{position:relative;display:block}
select{appearance:none;display:block;width:100%;height:23px;border:1px solid #9e9a8e;border-radius:0;background:#dcdad5;padding:0 2px;font:inherit;line-height:20px;color:#000;box-shadow:inset 1px 1px #eeebe7}
.combo svg{position:absolute;right:0;top:0;pointer-events:none}
input{display:block;height:21px;border:1px solid;border-color:#828282 #ededed #ededed #828282;border-radius:0;background:#fff;padding:0 2px;font:inherit;color:#000;min-width:0}
.text{width:252px;margin:10px 0 0 6px}
.xy{display:grid;grid-template-columns:23px 52px 38px 52px;align-items:center;margin:13px 0 0 7px;color:#000}
.second{padding-left:15px}
.btns{display:flex;gap:16px;margin:14px 0 0 6px}
.preview{width:100px;height:100px;margin-top:1px}`, `
<div class="form"><label class="combo"><select aria-label="Команда"><option>Клик левой кнопкой мыши</option></select><svg width="14" height="23" viewBox="0 0 14 23" aria-hidden="true"><path d="M.5 1v21" stroke="#9e9a8e"/><path d="M1.500 1v21" stroke="#eeebe7"/><path d="M3 10.500h8l-4 4z" fill="#000"/></svg></label>
<input class="text" aria-label="Текст">
<div class="xy"><label for="x">x=</label><input id="x" value="0"><label class="second" for="y">y=</label><input id="y" value="0"></div>
<div class="btns"><tk-button label="Добавить"><ui-icon name="add"></ui-icon></tk-button><tk-button label="Изменить"><ui-icon name="edit"></ui-icon></tk-button></div></div>
<tk-button class="preview" label="Изображение"></tk-button>`);

define('script-dialog', `
:host{display:block;background:#d9d9d9;border-radius:12px 12px 0 0;box-shadow:0 0 0 1px rgba(0,0,0,.25),0 4px 16px rgba(0,0,0,.5);font:13px/17px "DejaVu Sans",sans-serif;color:#000}
header{display:grid;grid-template-columns:1fr auto 1fr;align-items:center;height:37px;background:#ebebeb;border-radius:12px 12px 0 0;border-bottom:1px solid #b8b8b8;box-shadow:inset 0 1px #fff}
h2{grid-column:2;margin:0;font:700 14px/20px "Open Sans",sans-serif;color:#3a3a3a}
.ctl{display:flex;justify-content:flex-end;gap:12px;padding-right:7px;color:#333}
.ctl button{all:unset;display:flex;align-items:center;justify-content:center;width:22px;height:22px;border-radius:50%;background:#dadada}
.ctl .x{background:#bcbcbc}
nav{display:flex;gap:14px;align-items:center;height:32px;padding:0 8px;border-top:1px solid #fff;border-bottom:1px solid #828282}
nav button{all:unset}
.body{display:grid;grid-template-columns:383px 385px;column-gap:16px;padding:0 0 4px 1px}
.left,.right{display:flex;flex-direction:column}
.run{display:flex;gap:21px;padding:4px 0 0 12px}
.right{gap:15px}
.source{height:85px}
.cmd{--pad:6px 7px 4px 6px;--legend:-1px;height:170px}
.ops{--pad:12px;--legend:-7px;height:130px}
.pair{display:flex;gap:10px 26px;flex-wrap:wrap}
.pair tk-button{width:164px}
.info{--pad:5px 8px 0 8px;--legend:-3px;height:135px}
p{margin:0}
.hist{margin:-12px 0 0 13px}`, `
<header><h2>Редактор скриптов</h2><div class="ctl"><button aria-label="Свернуть"><ui-icon name="min"></ui-icon></button><button aria-label="Развернуть"><ui-icon name="max"></ui-icon></button><button class="x" aria-label="Закрыть"><ui-icon name="close"></ui-icon></button></div></header>
<nav><button>Файл</button><button>Настройки скрипта</button></nav>
<div class="body">
<div class="left"><script-list></script-list><div class="run"><tk-button label="Запись"><ui-icon name="record"></ui-icon></tk-button><tk-button label="Стоп"><ui-icon name="stop"></ui-icon></tk-button><tk-button label="Пуск"><ui-icon name="play"></ui-icon></tk-button></div></div>
<div class="right">
<group-box class="source" label="Источник данных"></group-box>
<group-box class="cmd" label="Редактор команд"><command-editor></command-editor></group-box>
<group-box class="ops" label="Редактор скрипта"><div class="pair"><tk-button label="Копировать"><ui-icon name="copy"></ui-icon></tk-button><tk-button label="Вырезать"><ui-icon name="cut"></ui-icon></tk-button><tk-button label="Вставить"><ui-icon name="paste"></ui-icon></tk-button><tk-button label="Удалить"><ui-icon name="trash"></ui-icon></tk-button></div></group-box>
<group-box class="info" label="Информация"><p>x, y - координаты на экране. Изображение - элемент, который программа ожидает "увидеть" в этом месте. Если изображения не будет в этих координатах, будут произведены действия в соответствии с настройками скрипта.</p></group-box>
<div class="pair hist"><tk-button label="Отменить"><ui-icon name="undo"></ui-icon></tk-button><tk-button label="Повторить"><ui-icon name="redo"></ui-icon></tk-button></div>
</div></div>`);

define('desk-top', `
:host{display:flex;flex-direction:column;height:100vh;position:relative}
.work{display:flex;flex:1;min-height:0}
script-dialog{position:absolute;left:283px;top:79px;width:800px}`, `
<top-bar></top-bar><div class="work"><app-dock></app-dock><writer-window></writer-window></div><script-dialog></script-dialog>`);
</script>
</body>
</html>
